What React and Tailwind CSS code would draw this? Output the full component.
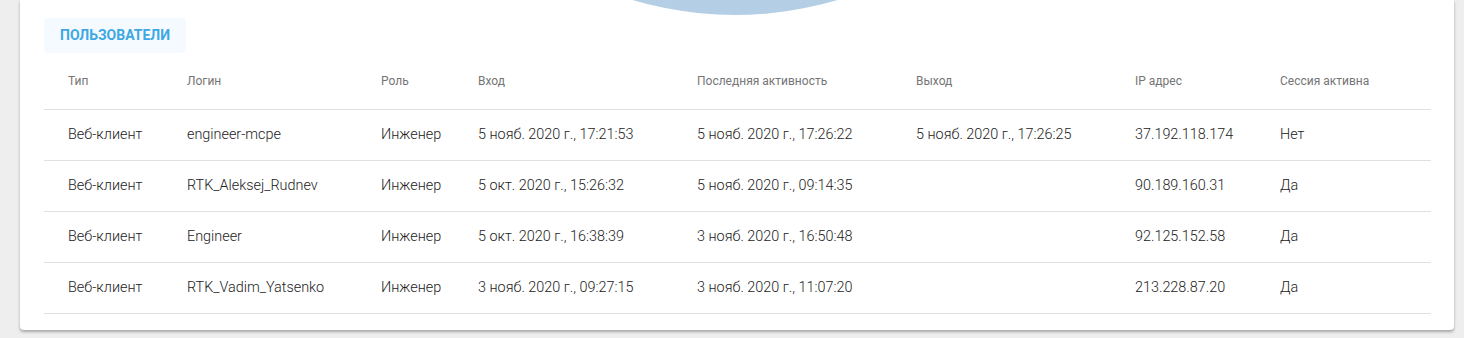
const headers = ["Тип", "Логин", "Роль", "Вход", "Последняя активность", "Выход", "IP адрес", "Сессия активна"];

const rows = [
  ["Веб-клиент", "engineer-mcpe", "Инженер", "5 нояб. 2020 г., 17:21:53", "5 нояб. 2020 г., 17:26:22", "5 нояб. 2020 г., 17:26:25", "37.192.118.174", "Нет"],
  ["Веб-клиент", "RTK_Aleksej_Rudnev", "Инженер", "5 окт. 2020 г., 15:26:32", "5 нояб. 2020 г., 09:14:35", "", "90.189.160.31", "Да"],
  ["Веб-клиент", "Engineer", "Инженер", "5 окт. 2020 г., 16:38:39", "3 нояб. 2020 г., 16:50:48", "", "92.125.152.58", "Да"],
  ["Веб-клиент", "RTK_Vadim_Yatsenko", "Инженер", "3 нояб. 2020 г., 09:27:15", "3 нояб. 2020 г., 11:07:20", "", "213.228.87.20", "Да"],
];

const cols = "grid grid-cols-[119px_194px_97px_219px_219px_219px_145px_1fr] px-6";

export default function App() {
  return (
    <div className="min-h-[338px] bg-[#eeeeee] pl-5 pr-[10px] font-['Roboto',sans-serif]">
      <div className="bg-white rounded-b shadow-[0_2px_3px_rgba(0,0,0,0.3)] pb-4">
        {/* top chart edge */}
        <div className="h-[18px] overflow-hidden">
          <div className="w-[716px] h-[716px] rounded-full bg-[#b4cfe5] mt-[-701px] ml-[357px]" />
        </div>

        <div className="pl-6 pr-[23px]">
          <button className="w-[142px] h-[35px] rounded bg-[#f4faff] text-[#3da8e3] text-[14px] font-bold uppercase">
            Пользователи
          </button>

          <div>
            <div className={`${cols} h-[57px] items-center border-b border-[#e0e0e0] text-[12px] text-[#757575]`}>
              {headers.map((h) => (
                <div key={h}>{h}</div>
              ))}
            </div>
            {rows.map((r, i) => (
              <div key={i} className={`${cols} h-[51px] items-center border-b border-[#e0e0e0] text-[14.4px] font-light text-[#222222]`}>
                {r.map((c, j) => (
                  <div key={j}>{c}</div>
                ))}
              </div>
            ))}
          </div>
        </div>
      </div>
    </div>
  );
}
